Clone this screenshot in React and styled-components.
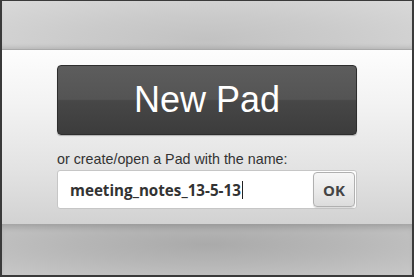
import styled, { createGlobalStyle } from "styled-components";

const GlobalStyle = createGlobalStyle`
  html, body {
    margin: 0;
    padding: 0;
    background: #fff;
  }
`;

const Frame = styled.div`
  box-sizing: border-box;
  width: 414px;
  height: 277px;
  border: 2px solid #3a3a3a;
  border-top-width: 1px;
  display: flex;
  flex-direction: column;
  overflow: hidden;
  font-family: "Liberation Sans", Arial, sans-serif;
`;

const TopBand = styled.div`
  height: 48px;
  flex: none;
  background: radial-gradient(ellipse at 50% 80%, #c2c2c2 0%, #cbcbcb 45%, #d9d9d9 100%);
  box-shadow: inset 0 -4px 4px -2px rgba(0, 0, 0, 0.12);
  border-bottom: 1px solid #a9a9a9;
`;

const Panel = styled.div`
  flex: 1;
  display: flex;
  flex-direction: column;
  align-items: center;
  padding-top: 15px;
  background: linear-gradient(to bottom, #fdfdfd 0%, #f3f3f3 30%, #e2e2e2 70%, #d2d2d2 100%);
`;

const Inner = styled.div`
  width: 300px;
  display: flex;
  flex-direction: column;
`;

const BigButton = styled.button`
  box-sizing: border-box;
  height: 70px;
  width: 100%;
  border: 1px solid #2e2e2e;
  border-radius: 4px;
  background: linear-gradient(to bottom, #5d5d5d 0%, #545454 49%, #474747 51%, #3c3c3c 100%);
  color: #fff;
  font-family: "Liberation Sans", Arial, sans-serif;
  font-size: 36px;
  padding: 0;
  box-shadow: 0 1px 1px rgba(0, 0, 0, 0.25);
`;

const Label = styled.div`
  margin-top: 16px;
  font-size: 14.3px;
  color: #333;
  line-height: 16px;
`;

const Field = styled.div`
  box-sizing: border-box;
  margin-top: 3px;
  height: 39px;
  display: flex;
  align-items: center;
  background: #fff;
  border: 1px solid #c6c6c6;
  border-radius: 3px;
  padding: 0 1px 0 12px;
`;

const Value = styled.div`
  flex: 1;
  font-family: "Open Sans", "DejaVu Sans", sans-serif;
  font-weight: 700;
  font-size: 15.2px;
  color: #333;
  display: flex;
  align-items: center;
`;

const Caret = styled.span`
  display: inline-block;
  width: 1px;
  height: 18px;
  margin-left: 1px;
  background: #222;
`;

const OkButton = styled.button`
  box-sizing: border-box;
  width: 42px;
  height: 35px;
  border: 1px solid #b0b0b0;
  border-radius: 4px;
  background: linear-gradient(to bottom, #f6f6f6 0%, #e8e8e8 60%, #dcdcdc 100%);
  box-shadow: 0 1px 1px rgba(0, 0, 0, 0.15);
  font-family: "Open Sans", "DejaVu Sans", sans-serif;
  font-weight: 700;
  font-size: 15px;
  color: #444;
  padding: 0;
`;

const BottomBand = styled.div`
  height: 51px;
  flex: none;
  background: radial-gradient(ellipse at 50% 40%, #aaaaaa 0%, #b6b6b6 45%, #c8c8c8 100%);
  box-shadow: inset 0 6px 6px -3px rgba(0, 0, 0, 0.18);
`;

export default function App() {
  return (
    <>
      <GlobalStyle />
      <Frame>
        <TopBand />
        <Panel>
          <Inner>
            <BigButton>New Pad</BigButton>
            <Label>or create/open a Pad with the name:</Label>
            <Field>
              <Value>
                meeting_notes_13-5-13
                <Caret />
              </Value>
              <OkButton>OK</OkButton>
            </Field>
          </Inner>
        </Panel>
        <BottomBand />
      </Frame>
    </>
  );
}
